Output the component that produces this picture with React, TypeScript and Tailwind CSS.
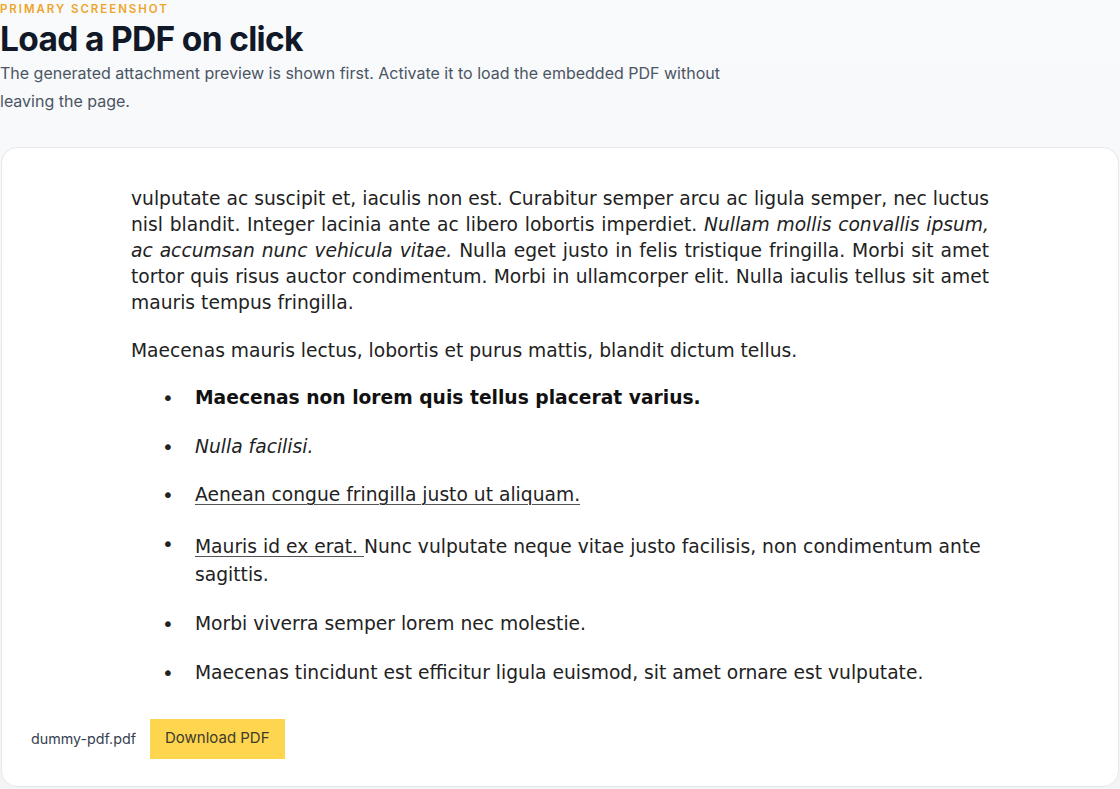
function Bullet({ children }: { children: React.ReactNode }) {
  return (
    <li className="flex items-start">
      <span className="w-[64px] shrink-0 pl-[31px] text-[20px] leading-[26px]">•</span>
      <span className="flex-1">{children}</span>
    </li>
  );
}

export default function App() {
  return (
    <div className="min-h-screen bg-gradient-to-b from-[#f8fafc] to-[#f3f4f6] font-['Inter',sans-serif]">
      <header className="pb-[32px]">
        <p className="pt-[2px] text-[11.5px] font-semibold uppercase leading-[14px] tracking-[0.17em] text-[#eea52c]">
          Primary screenshot
        </p>
        <h1 className="mt-[3px] text-[33.5px] font-bold leading-[40px] tracking-[-0.02em] text-[#111827]">
          Load a PDF on click
        </h1>
        <p className="max-w-[740px] text-[16px] leading-[28px] text-[#4b5563]">
          The generated attachment preview is shown first. Activate it to load the embedded PDF without leaving the page.
        </p>
      </header>

      <section className="mx-[1px] overflow-hidden rounded-[16px] border border-[#e5e7eb] bg-white">
        <button type="button" className="block w-full cursor-pointer text-left">
          <div className="mx-auto w-[858px] pt-[38px] font-['DejaVu_Sans',sans-serif] text-[18.7px] leading-[26px] text-[#222]">
            <p className="text-justify [text-align-last:left]">
              vulputate ac suscipit et, iaculis non est. Curabitur semper arcu ac ligula semper, nec luctus nisl blandit. Integer lacinia ante ac libero lobortis imperdiet.{' '}
              <em>Nullam mollis convallis ipsum, ac accumsan nunc vehicula vitae.</em> Nulla eget justo in felis tristique fringilla. Morbi sit amet tortor quis risus auctor condimentum. Morbi in ullamcorper elit. Nulla iaculis tellus sit amet mauris tempus fringilla.
            </p>
            <p className="mt-[22px]">Maecenas mauris lectus, lobortis et purus mattis, blandit dictum tellus.</p>
            <ul className="mt-[21px] flex flex-col gap-[22.5px]">
              <Bullet>
                <strong className="font-bold text-[#111]">Maecenas non lorem quis tellus placerat varius.</strong>
              </Bullet>
              <Bullet>
                <em>Nulla facilisi.</em>
              </Bullet>
              <Bullet>
                <span className="underline decoration-1 decoration-[#555] underline-offset-[3px]">Aenean congue fringilla justo ut aliquam. </span>
              </Bullet>
              <Bullet>
                <span className="block pt-[2px] leading-[28px]">
                  <span className="underline decoration-1 decoration-[#555] underline-offset-[3px]">Mauris id ex erat. </span>
                  Nunc vulputate neque vitae justo facilisis, non condimentum ante sagittis.
                </span>
              </Bullet>
              <Bullet>Morbi viverra semper lorem nec molestie.</Bullet>
              <Bullet>Maecenas tincidunt est efficitur ligula euismod, sit amet ornare est vulputate.</Bullet>
            </ul>
          </div>
        </button>

        <div className="flex items-center gap-[14px] px-[29px] pb-[27px] pt-[33px]">
          <span className="text-[14.3px] text-[#374151]">dummy-pdf.pdf</span>
          <a
            href="#"
            className="flex h-[40px] items-center bg-[#fdd54f] px-[15px] text-[15px] text-[#3f3a2c]"
          >
            Download PDF
          </a>
        </div>
      </section>
    </div>
  );
}
